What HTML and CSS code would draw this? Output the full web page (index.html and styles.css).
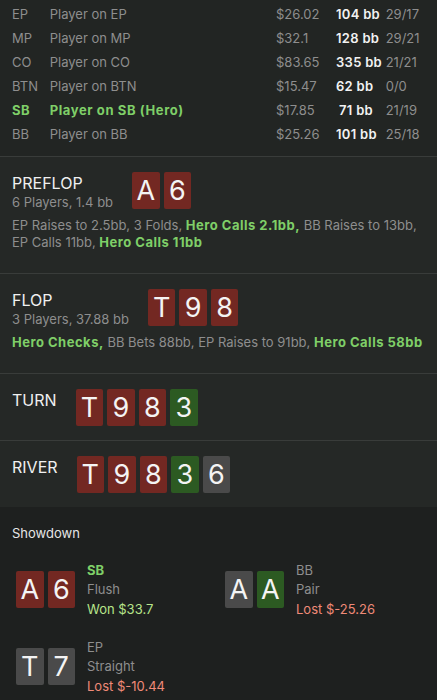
FILE: index.html
```html
<!DOCTYPE html>
<html>
<head>
<meta charset="utf-8">
<link rel="stylesheet" href="styles.css">
</head>
<body>
<div class="page">
  <section class="players">
    <div class="prow"><span class="pos">EP</span><span class="name">Player on EP</span><span class="money">$26.02</span><span class="bb">104 bb</span><span class="ratio">29/17</span></div>
    <div class="prow"><span class="pos">MP</span><span class="name">Player on MP</span><span class="money">$32.1</span><span class="bb">128 bb</span><span class="ratio">29/21</span></div>
    <div class="prow"><span class="pos">CO</span><span class="name">Player on CO</span><span class="money">$83.65</span><span class="bb">335 bb</span><span class="ratio">21/21</span></div>
    <div class="prow"><span class="pos">BTN</span><span class="name">Player on BTN</span><span class="money">$15.47</span><span class="bb">62 bb</span><span class="ratio">0/0</span></div>
    <div class="prow hero"><span class="pos">SB</span><span class="name">Player on SB (Hero)</span><span class="money">$17.85</span><span class="bb">71 bb</span><span class="ratio">21/19</span></div>
    <div class="prow"><span class="pos">BB</span><span class="name">Player on BB</span><span class="money">$25.26</span><span class="bb">101 bb</span><span class="ratio">25/18</span></div>
  </section>

  <section class="street">
    <div class="head">
      <div class="titles">
        <div class="title">PREFLOP</div>
        <div class="sub">6 Players, 1.4 bb</div>
      </div>
      <div class="cards"><span class="card red">A</span><span class="card red">6</span></div>
    </div>
    <p class="actions">EP Raises to 2.5bb, 3 Folds, <b class="hero-act">Hero Calls 2.1bb,</b> BB Raises to 13bb, EP Calls 11bb, <b class="hero-act">Hero Calls 11bb</b></p>
  </section>

  <section class="street">
    <div class="head">
      <div class="titles">
        <div class="title">FLOP</div>
        <div class="sub">3 Players, 37.88 bb</div>
      </div>
      <div class="cards"><span class="card red">T</span><span class="card red">9</span><span class="card red">8</span></div>
    </div>
    <p class="actions"><b class="hero-act">Hero Checks,</b> BB Bets 88bb, EP Raises to 91bb, <b class="hero-act">Hero Calls 58bb</b></p>
  </section>

  <section class="street">
    <div class="head">
      <div class="titles"><div class="title">TURN</div></div>
      <div class="cards"><span class="card red">T</span><span class="card red">9</span><span class="card red">8</span><span class="card green">3</span></div>
    </div>
  </section>

  <section class="street last">
    <div class="head">
      <div class="titles"><div class="title">RIVER</div></div>
      <div class="cards"><span class="card red">T</span><span class="card red">9</span><span class="card red">8</span><span class="card green">3</span><span class="card gray">6</span></div>
    </div>
  </section>

  <section class="showdown">
    <div class="sd-title">Showdown</div>
    <div class="sd-grid">
      <div class="sd-item">
        <div class="cards"><span class="card red">A</span><span class="card red">6</span></div>
        <div class="sd-text"><div class="sd-pos hero-pos">SB</div><div class="sd-hand">Flush</div><div class="won">Won $33.7</div></div>
      </div>
      <div class="sd-item">
        <div class="cards"><span class="card gray">A</span><span class="card green">A</span></div>
        <div class="sd-text"><div class="sd-pos">BB</div><div class="sd-hand">Pair</div><div class="lost">Lost $-25.26</div></div>
      </div>
      <div class="sd-item">
        <div class="cards"><span class="card gray">T</span><span class="card gray">7</span></div>
        <div class="sd-text"><div class="sd-pos">EP</div><div class="sd-hand">Straight</div><div class="lost">Lost $-10.44</div></div>
      </div>
    </div>
  </section>
</div>
</body>
</html>
```

FILE: styles.css
```css
* { box-sizing: border-box; }
html, body { margin: 0; padding: 0; }
body {
  background: #1e201f;
  font-family: Inter, "Liberation Sans", sans-serif;
  font-size: 13px;
  color: #8e8e8e;
}
.page { width: 437px; height: 700px; overflow: hidden; }

.players {
  background: #222523;
  padding: 2px 12px 10px;
  border-bottom: 1px solid #393c3a;
}
.prow {
  display: grid;
  grid-template-columns: 37.7px 1fr 60px 37px 52px;
  line-height: 24px;
  height: 24px;
  white-space: nowrap;
}
.prow .bb { text-align: right; color: #f2f2f2; font-weight: 600; letter-spacing: 0.3px; }
.prow .ratio { padding-left: 12.7px; }
.prow.hero .pos, .prow.hero .name { color: #7fcf68; font-weight: 700; letter-spacing: 0.6px; }

.street {
  background: #252826;
  padding: 15px 4px 14px 12px;
  border-bottom: 1px solid #393c3a;
}
.street.last { border-bottom: none; }
.head { display: flex; align-items: flex-start; gap: 19px; }
.title { font-size: 16px; line-height: 22px; color: #f0f0f0; }
.sub { font-size: 13px; line-height: 16px; color: #8e8e8e; }
.cards { display: flex; gap: 4px; }
.card {
  width: 27.5px;
  height: 37px;
  border-radius: 2px;
  display: flex;
  align-items: center;
  justify-content: center;
  font-size: 27px;
  color: #f4f4f4;
}
.card.red { background: #732822; }
.card.green { background: #2c5a22; }
.card.gray { background: #4a4a4a; }

.actions {
  margin: 7px 0 8px;
  line-height: 17px;
  color: #8e8e8e;
}
.hero-act { color: #7fcf68; font-weight: 700; letter-spacing: 0.5px; }

.showdown {
  background: #1e201f;
  padding: 18px 0 0 12px;
}
.sd-title { color: #e6e6e6; line-height: 16px; }
.sd-grid {
  display: grid;
  grid-template-columns: 209px 1fr;
  row-gap: 18.5px;
  margin-top: 19.6px;
  padding-left: 4px;
}
.sd-item { display: flex; align-items: center; gap: 12px; }
.sd-text { line-height: 19.5px; font-size: 13px; }
.sd-pos, .sd-hand { color: #8e8e8e; }
.hero-pos { color: #7fcf68; font-weight: 700; }
.won { color: #b7e48a; }
.lost { color: #ef8a78; }
```
